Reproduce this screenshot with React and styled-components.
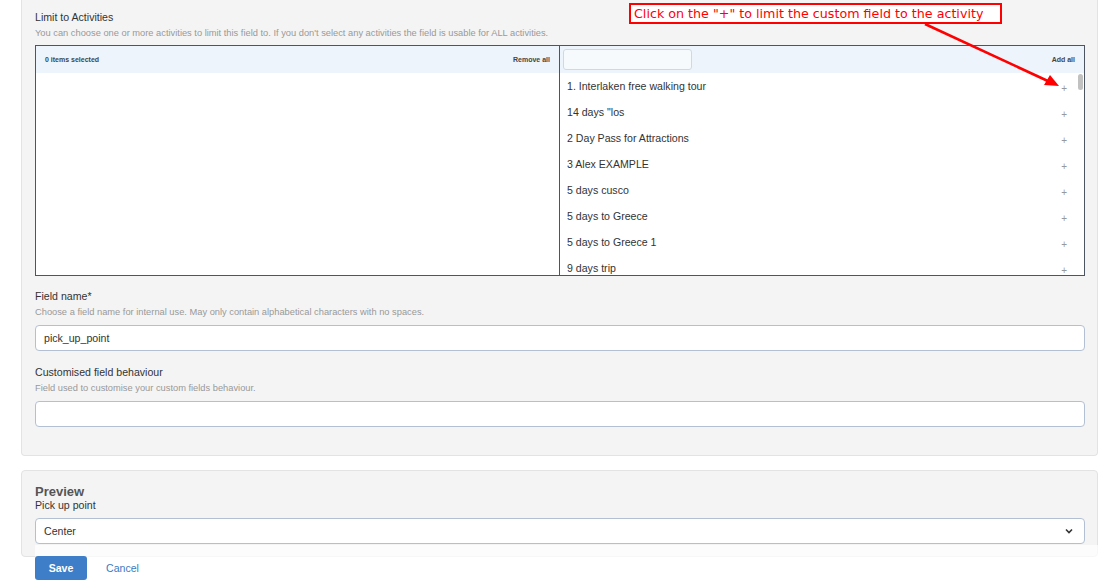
import styled, { createGlobalStyle } from "styled-components";

const GlobalStyle = createGlobalStyle`
  html, body {
    margin: 0;
    padding: 0;
    background: #fff;
  }
  body {
    font-family: "Liberation Sans", Arial, sans-serif;
    color: #333;
  }
`;

const Page = styled.div`
  position: relative;
  width: 1106px;
  height: 587px;
  overflow: hidden;
  box-sizing: border-box;
  padding: 0 8px 0 21px;
`;

const Panel = styled.div`
  background: #f4f4f4;
  border: 1px solid #e3e3e3;
  border-top: ${(p) => (p.$cut ? "none" : "1px solid #e3e3e3")};
  border-radius: ${(p) => (p.$cut ? "0 0 4px 4px" : "4px")};
  padding: ${(p) => p.$pad};
  margin-top: ${(p) => p.$mt || "0"};
`;

const Label = styled.div`
  font-size: 10.6px;
  line-height: 13px;
  color: #333;
`;

const Help = styled.div`
  font-size: 9.3px;
  line-height: 11px;
  color: #999;
  margin-top: 4px;
`;

const Group = styled.div`
  margin-top: ${(p) => p.$mt};
`;

const Picker = styled.div`
  display: grid;
  grid-template-columns: 523px 1fr;
  border: 1px solid #4d5561;
  height: 229px;
  margin-top: 6px;
  background: #fff;
`;

const Column = styled.div`
  position: relative;
  display: flex;
  flex-direction: column;
  min-height: 0;
  border-left: ${(p) => (p.$right ? "1px solid #4d5561" : "none")};
`;

const ColHead = styled.div`
  height: 27px;
  flex: none;
  background: #edf4fc;
  display: flex;
  align-items: center;
  justify-content: space-between;
  padding: 0 9px 0 ${(p) => (p.$right ? "3px" : "9px")};
  font-size: 7px;
  font-weight: bold;
  color: #444;
`;

const Search = styled.div`
  width: 127px;
  height: 19px;
  border: 1px solid #cfd9e5;
  border-radius: 3px;
  background: #f7fafd;
`;

const List = styled.div`
  flex: 1;
  overflow: hidden;
`;

const Item = styled.div`
  height: 26px;
  display: flex;
  align-items: center;
  justify-content: space-between;
  padding: 0 17px 0 7px;
  font-size: 10.6px;
  color: #333;
`;

const Plus = styled.span`
  font-size: 10px;
  color: #999;
  margin-top: 4px;
`;

const Thumb = styled.div`
  position: absolute;
  right: 1px;
  top: 28px;
  width: 5px;
  height: 16px;
  border-radius: 3px;
  background: #c1c1c1;
`;

const Input = styled.div`
  box-sizing: border-box;
  height: 26px;
  margin-top: ${(p) => p.$mt || "8px"};
  border: 1px solid #b3c0d3;
  border-radius: 4px;
  background: #fff;
  display: flex;
  align-items: center;
  justify-content: space-between;
  padding: 0 11px 0 8px;
  font-size: 10.6px;
  color: #333;
`;

const Title = styled.div`
  font-size: 13px;
  font-weight: bold;
  color: #555;
  line-height: 15px;
`;

const Footer = styled.div`
  position: relative;
  margin: -12px 0 0 14px;
  padding: 11px 0 20px;
  background: rgba(255, 255, 255, 0.72);
  display: flex;
  align-items: center;
  gap: 19px;
`;

const SaveButton = styled.button`
  width: 52px;
  height: 24px;
  border: none;
  border-radius: 3px;
  background: #3e7ec8;
  color: #fff;
  font-family: "Liberation Sans", Arial, sans-serif;
  font-size: 10.6px;
  font-weight: bold;
  padding: 0;
`;

const CancelLink = styled.span`
  font-size: 10.6px;
  color: #3b7ac2;
`;

const Callout = styled.div`
  position: absolute;
  left: 629px;
  top: 3px;
  width: 366px;
  height: 17px;
  border: 2px solid #ff0000;
  background: #fff;
  color: #ff0000;
  font-family: "DejaVu Sans", Verdana, sans-serif;
  font-size: 12.7px;
  line-height: 17px;
  padding-left: 3px;
  white-space: nowrap;
  overflow: hidden;
`;

const Arrow = styled.svg`
  position: absolute;
  left: 0;
  top: 0;
  pointer-events: none;
`;

const activities = [
  "1. Interlaken free walking tour",
  '14 days "los',
  "2 Day Pass for Attractions",
  "3 Alex EXAMPLE",
  "5 days cusco",
  "5 days to Greece",
  "5 days to Greece 1",
  "9 days trip",
];

const Chevron = () => (
  <svg width="8" height="6" viewBox="0 0 8 6">
    <path d="M1 1.5 L4 4.5 L7 1.5" fill="none" stroke="#333" strokeWidth="1.6" />
  </svg>
);

export default function App() {
  return (
    <>
      <GlobalStyle />
      <Page>
        <Panel $cut $pad="11px 12px 28px 13px">
          <Label>Limit to Activities</Label>
          <Help>
            You can choose one or more activities to limit this field to. If you don't select any
            activities the field is usable for ALL activities.
          </Help>
          <Picker>
            <Column>
              <ColHead>
                <span>0 items selected</span>
                <span>Remove all</span>
              </ColHead>
            </Column>
            <Column $right>
              <ColHead $right>
                <Search />
                <span>Add all</span>
              </ColHead>
              <List>
                {activities.map((a) => (
                  <Item key={a}>
                    <span>{a}</span>
                    <Plus>+</Plus>
                  </Item>
                ))}
              </List>
              <Thumb />
            </Column>
          </Picker>

          <Group $mt="14px">
            <Label>Field name*</Label>
            <Help>Choose a field name for internal use. May only contain alphabetical characters with no spaces.</Help>
            <Input $mt="7px">pick_up_point</Input>
          </Group>

          <Group $mt="15px">
            <Label>Customised field behaviour</Label>
            <Help>Field used to customise your custom fields behaviour.</Help>
            <Input $mt="7px" />
          </Group>
        </Panel>

        <Panel $mt="14px" $pad="13px 12px 12px 13px">
          <Title>Preview</Title>
          <Label>Pick up point</Label>
          <Input $mt="6px">
            <span>Center</span>
            <Chevron />
          </Input>
        </Panel>

        <Footer>
          <SaveButton>Save</SaveButton>
          <CancelLink>Cancel</CancelLink>
        </Footer>

        <Callout>Click on the "+" to limit the custom field to the activity</Callout>
        <Arrow width="1106" height="120" viewBox="0 0 1106 120">
          <line x1="925" y1="24" x2="1050" y2="82" stroke="#ff0000" strokeWidth="2.6" />
          <path d="M1059 86 L1044 85 L1050 75 Z" fill="#ff0000" />
        </Arrow>
      </Page>
    </>
  );
}
